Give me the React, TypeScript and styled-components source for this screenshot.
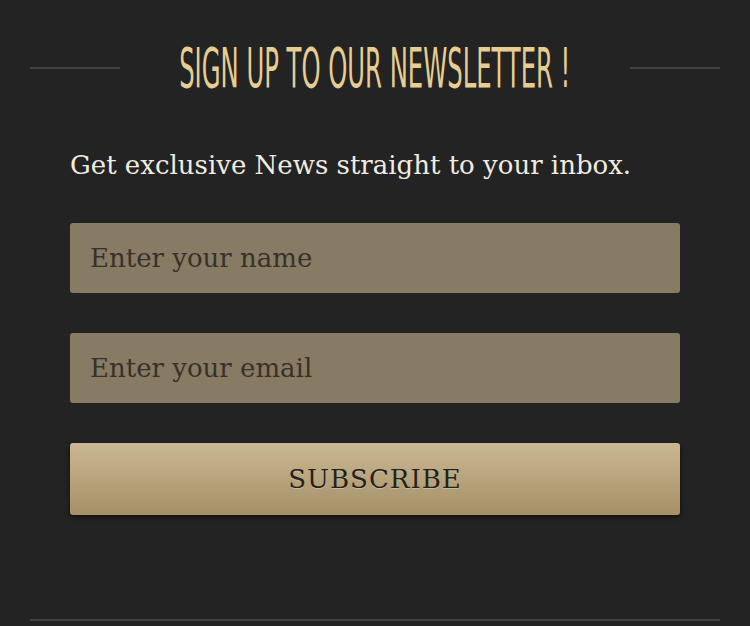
import React from 'react';
import styled, { createGlobalStyle } from 'styled-components';

const GlobalStyle = createGlobalStyle`
  html, body {
    margin: 0;
    padding: 0;
    background: #232323;
  }
`;

const Section = styled.section`
  width: 750px;
  height: 626px;
  box-sizing: border-box;
  padding: 0 30px;
  background: #232323;
  display: flex;
  flex-direction: column;
`;

const TitleRow = styled.div`
  display: grid;
  grid-template-columns: 90px minmax(0, 1fr) 90px;
  align-items: center;
  height: 70px;
  margin-top: 33px;
`;

const Rule = styled.hr`
  margin: 0;
  border: none;
  height: 2px;
  background: #45403a;
`;

const TitleWrap = styled.div`
  display: flex;
  justify-content: center;
  min-width: 0;
`;

// the condensed display face is faked by squeezing a condensed sans
const Title = styled.h2`
  flex: none;
  margin: 0;
  font-family: "DejaVu Sans Condensed", "Liberation Sans", sans-serif;
  font-weight: 400;
  font-size: 56px;
  line-height: 1;
  color: #e7cd91;
  white-space: nowrap;
  transform: scaleX(0.482);
`;

const Body = styled.div`
  padding: 0 40px;
  display: flex;
  flex-direction: column;
`;

const Lead = styled.p`
  margin: 44px 0 0;
  font-family: "DejaVu Serif", "Liberation Serif", serif;
  font-size: 26px;
  line-height: 36px;
  color: #f1ece1;
`;

const Field = styled.input<{ $gap: number }>`
  display: block;
  box-sizing: border-box;
  width: 100%;
  height: 70px;
  margin-top: ${p => p.$gap}px;
  padding: 0 20px;
  border: none;
  border-radius: 3px;
  background: #877b63;
  font-family: "DejaVu Serif", "Liberation Serif", serif;
  font-size: 26px;
  color: #2f2a22;
  outline: none;

  &::placeholder {
    color: #37312a;
    opacity: 1;
  }
`;

const Subscribe = styled.button`
  display: block;
  width: 100%;
  height: 72px;
  margin-top: 40px;
  border: none;
  border-radius: 3px;
  background: linear-gradient(to bottom, #cab892 0%, #b8a47c 50%, #a48f67 100%);
  box-shadow: 0 2px 5px rgba(0, 0, 0, 0.55);
  font-family: "DejaVu Serif", "Liberation Serif", serif;
  font-size: 26px;
  letter-spacing: 1px;
  color: #25211c;
  text-shadow: 0 1px 0 rgba(255, 255, 255, 0.25);
  cursor: pointer;
`;

const Footer = styled.div`
  margin-top: auto;
  margin-bottom: 5px;
  height: 2px;
  background: #45413a;
`;

export default function App() {
  return (
    <>
      <GlobalStyle />
      <Section>
        <TitleRow>
          <Rule />
          <TitleWrap>
            <Title>SIGN UP TO OUR NEWSLETTER !</Title>
          </TitleWrap>
          <Rule />
        </TitleRow>
        <Body>
          <Lead>Get exclusive News straight to your inbox.</Lead>
          <Field $gap={40} type="text" placeholder="Enter your name" />
          <Field $gap={40} type="email" placeholder="Enter your email" />
          <Subscribe type="button">SUBSCRIBE</Subscribe>
        </Body>
        <Footer />
      </Section>
    </>
  );
}
